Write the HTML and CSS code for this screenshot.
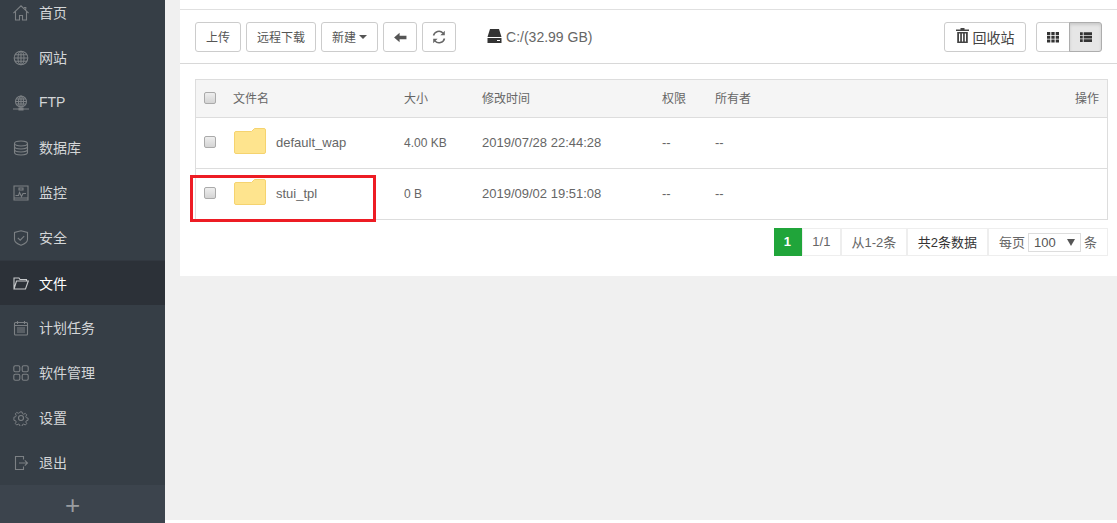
FILE: index.html
```html
<!DOCTYPE html>
<html lang="zh">
<head>
<meta charset="utf-8">
<title>文件管理</title>
<link rel="stylesheet" href="styles.css">
</head>
<body>
<div class="app">
  <aside class="sidebar">
    <nav class="menu">
      <a class="item"><svg class="ico" viewBox="0 0 16 16"><path d="M.4 8.200 8 .8l7.600 7.400M2.500 6.500V15h4v-4.500h3V15h4V6.500M11 2.500h1.800v2"/></svg><span>首页</span></a>
      <a class="item"><svg class="ico" viewBox="0 0 16 16"><circle cx="8" cy="8" r="6.800"/><ellipse cx="8" cy="8" rx="3" ry="6.800"/><path d="M8 1.200v13.600M1.200 8h13.600M2 4.800h12M2 11.200h12"/></svg><span>网站</span></a>
      <a class="item"><svg class="ico" viewBox="0 0 16 16"><circle cx="8" cy="6.500" r="5.500"/><ellipse cx="8" cy="6.500" rx="2.500" ry="5.500"/><path d="M8 1v11M2.500 6.500h11M3.200 4h9.600M3.200 9h9.600M0 14h16M6 13h4v2H6z"/></svg><span>FTP</span></a>
      <a class="item"><svg class="ico" viewBox="0 0 16 16"><ellipse cx="8" cy="3.500" rx="6.500" ry="2.500"/><path d="M1.500 3.500v9c0 1.400 2.900 2.500 6.500 2.500s6.500-1.100 6.500-2.500v-9M1.500 6.500C1.500 7.900 4.400 9 8 9s6.500-1.100 6.500-2.500M1.500 9.500c0 1.400 2.900 2.500 6.500 2.500s6.500-1.100 6.500-2.500"/></svg><span>数据库</span></a>
      <a class="item"><svg class="ico" viewBox="0 0 16 16"><path d="M1 1h14v14H1zM1 13h14M2.500 10.500h3l1-3 2 4 1.500-3h3M6 3h4v2H6z"/></svg><span>监控</span></a>
      <a class="item"><svg class="ico" viewBox="0 0 16 16"><path d="M8 .8 14.500 2.500v7c0 2.500-3.500 4.700-6.500 5.800-3-1.100-6.500-3.300-6.500-5.800v-7zM4.800 7.800l2.400 2.400 4-4"/></svg><span>安全</span></a>
      <a class="item active"><svg class="ico" viewBox="0 0 16 16"><path d="M1 14V3h5l1 1.500h6.500V6M1 14h11.500L15.300 6H3.500L1 14z"/></svg><span>文件</span></a>
      <a class="item"><svg class="ico" viewBox="0 0 16 16"><path d="M2.500 2.500h11a1 1 0 0 1 1 1v10.500a1 1 0 0 1-1 1h-11a1 1 0 0 1-1-1V3.500a1 1 0 0 1 1-1zM4.500 1v3M11.500 1v3M1.500 5.500h13M4 8h8M4 10h8M4 12h8"/></svg><span>计划任务</span></a>
      <a class="item"><svg class="ico" viewBox="0 0 16 16"><rect x=".8" y=".8" width="6" height="6" rx="1.500"/><rect x="9.200" y=".8" width="6" height="6" rx="1.500"/><rect x=".8" y="9.200" width="6" height="6" rx="1.500"/><rect x="9.200" y="9.200" width="6" height="6" rx="1.500"/></svg><span>软件管理</span></a>
      <a class="item"><svg class="ico" viewBox="0 0 16 16"><circle cx="8" cy="8" r="2.500"/><path d="M6.800 1h2.400l.4 2 1.500.7 1.800-1 1.600 1.700-1 1.700.6 1.600 2 .5v2.400l-2 .5-.6 1.500 1 1.800-1.600 1.600-1.800-1-1.500.6-.4 2H6.800l-.4-2-1.500-.6-1.800 1-1.600-1.600 1-1.800-.6-1.500-2-.5V7.100l2-.5.600-1.600-1-1.700 1.600-1.700 1.800 1 1.500-.7z" transform="translate(1 1) scale(.875)"/></svg><span>设置</span></a>
      <a class="item"><svg class="ico" viewBox="0 0 16 16"><path d="M10.500 4.500V1.500h-8v13h8v-3M6 8h8.500M11.800 5.300 14.500 8l-2.700 2.700"/></svg><span>退出</span></a>
    </nav>
    <div class="add">+</div>
  </aside>
  <main class="main">
    <section class="panel">
      <div class="toolbar">
        <div class="tools">
          <button class="btn">上传</button>
          <button class="btn">远程下载</button>
          <button class="btn">新建 <i class="caret"></i></button>
          <button class="btn icon-btn"><svg class="glyph" viewBox="0 0 14 12"><path d="M0 6 6 .8V4h7.500v4H6v3.200z"/></svg></button>
          <button class="btn icon-btn"><svg class="refresh" viewBox="0 0 14 14"><path d="M1.500 5.500A5.600 5.600 0 0 1 11 3M12.500 8.500A5.600 5.600 0 0 1 3 11"/><path class="solid" d="M12.800.8v4.400H8.400zM1.200 13.200V8.800h4.400z"/></svg></button>
          <div class="disk"><svg class="drive" viewBox="0 0 15 14"><path d="M3 0h9l2.500 8H.5zM.5 9h14v5H.5z"/><path class="slot" d="M10 11h3v1h-3z"/></svg>C:/(32.99 GB)</div>
        </div>
        <div class="tools">
          <button class="btn recycle"><svg class="trash" viewBox="0 0 13 15"><path d="M4.500 0h4v1.500H13V3H0V1.500h4.500zM1.200 4h10.600v11H1.200zM3 5.500v8h1.200v-8zM5.900 5.500v8h1.200v-8zM8.800 5.500v8H10v-8z" fill-rule="evenodd"/></svg>回收站</button>
          <div class="switch">
            <button class="sw"><svg class="grid-i" viewBox="0 0 12 12"><path d="M0 1h3.300v3H0zM4.350 1h3.300v3h-3.300zM8.700 1H12v3H8.700zM0 4.700h3.300v3H0zM4.350 4.700h3.300v3h-3.300zM8.700 4.700H12v3H8.700zM0 8.400h3.300v3H0zM4.350 8.400h3.300v3h-3.300zM8.700 8.400H12v3H8.700z"/></svg></button>
            <button class="sw on"><svg class="grid-i" viewBox="0 0 13 12"><path d="M0 .8h3v3H0zM4 .8h9v3H4zM0 4.600h3v3H0zM4 4.600h9v3H4zM0 8.400h3v3H0zM4 8.400h9v3H4z"/></svg></button>
          </div>
        </div>
      </div>
      <div class="content">
        <div class="table">
          <div class="row head">
            <span class="c-check"><i class="check"></i></span>
            <span class="c-name">文件名</span>
            <span class="c-size">大小</span>
            <span class="c-time">修改时间</span>
            <span class="c-perm">权限</span>
            <span class="c-owner">所有者</span>
            <span class="c-op">操作</span>
          </div>
          <div class="row">
            <span class="c-check"><i class="check"></i></span>
            <span class="c-name"><svg class="folder" viewBox="0 0 32 26"><path d="M.5 5a1.500 1.500 0 0 1 1.500-1.500h15.500l3-3H30a1.500 1.500 0 0 1 1.500 1.500v22a1.500 1.500 0 0 1-1.500 1.500H2A1.500 1.500 0 0 1 .5 24z"/></svg>default_wap</span>
            <span class="c-size">4.00 KB</span>
            <span class="c-time">2019/07/28 22:44:28</span>
            <span class="c-perm">--</span>
            <span class="c-owner">--</span>
            <span class="c-op"></span>
          </div>
          <div class="row">
            <span class="c-check"><i class="check"></i></span>
            <span class="c-name"><svg class="folder" viewBox="0 0 32 26"><path d="M.5 5a1.500 1.500 0 0 1 1.500-1.500h15.500l3-3H30a1.500 1.500 0 0 1 1.500 1.500v22a1.500 1.500 0 0 1-1.500 1.500H2A1.500 1.500 0 0 1 .5 24z"/></svg>stui_tpl</span>
            <span class="c-size">0 B</span>
            <span class="c-time">2019/09/02 19:51:08</span>
            <span class="c-perm">--</span>
            <span class="c-owner">--</span>
            <span class="c-op"></span>
          </div>
        </div>
        <div class="pager">
          <span class="pg cur">1</span>
          <span class="pg tight">1/1</span>
          <span class="pg tight">从1-2条</span>
          <span class="pg dark">共2条数据</span>
          <span class="pg per">每页<span class="sel">100<i class="tri"></i></span>条</span>
        </div>
      </div>
      <div class="mark"></div>
    </section>
  </main>
</div>
</body>
</html>
```
FILE: styles.css
```css
* { box-sizing: border-box; }
html, body { margin: 0; height: 523px; overflow: hidden; background: #fff; }
body { font: 12px "Liberation Sans", "Noto Sans CJK SC", sans-serif; color: #666; }
.app { display: flex; height: 523px; }

.sidebar { width: 165px; flex: none; background: #363e46; display: flex; flex-direction: column; overflow: hidden; }
.menu { margin-top: -10px; flex: 1; }
.item { display: flex; align-items: center; height: 45px; padding-left: 13px; color: #d4d6d8; font-size: 14px; font-weight: 400; }
.item span { margin-left: 10px; margin-bottom: 1px; }
.item.active { background: #2c3138; color: #fff; border-top: 1px solid #323840; }
.ico { width: 16px; height: 16px; flex: none; fill: none; stroke: #7c8084; stroke-width: 1.100; }
.item.active .ico { stroke: #c8cacc; }
.add { height: 38px; padding-right: 20px; background: #3c444d; color: #9a9da1; font-size: 26px; line-height: 40px; text-align: center; font-weight: 400; }

.main { flex: 1; height: 520px; background: #f0f0f0; padding-left: 15px; }
.panel { position: relative; background: #fff; height: 276px; padding-top: 9px; }
.toolbar { display: flex; justify-content: space-between; height: 55px; padding: 12px 15px 0 15px; border-top: 1px solid #e0e0e0; border-bottom: 1px solid #d8d8d8; }
.tools { display: flex; gap: 5px; align-items: flex-start; }
.btn { height: 30px; padding: 0 10px 2px; border: 1px solid #ccc; border-radius: 3px; background: #fff; color: #555; font: 12px "Liberation Sans", "Noto Sans CJK SC", sans-serif; display: flex; align-items: center; justify-content: center; }
.caret { display: inline-block; margin-left: 3px; margin-top: 2px; border: 4px solid transparent; border-top-color: #555; border-bottom: 0; }
.icon-btn { width: 34px; padding: 0; }
.glyph { width: 13px; height: 11px; fill: #555; }
.refresh { width: 14px; height: 14px; fill: none; stroke: #666; stroke-width: 1.500; }
.refresh .solid { fill: #666; stroke: none; }
.disk { display: flex; align-items: center; height: 30px; margin-left: 26px; font-size: 14px; color: #666; }
.drive { width: 15px; height: 14px; margin-right: 4px; margin-top: -2px; fill: #333; }
.drive .slot { fill: #fff; }
.recycle { width: 82px; font-size: 14px; color: #444; padding: 0 0 1px; }
.trash { width: 13px; height: 15px; margin-right: 4px; margin-top: -3px; fill: #444; }
.switch { display: flex; margin-left: 5px; }
.sw { width: 34px; height: 30px; border: 1px solid #ccc; background: #fff; padding: 0; display: flex; align-items: center; justify-content: center; border-radius: 3px 0 0 3px; }
.sw.on { width: 33px; background: #e6e6e6; border-color: #adadad; border-radius: 0 3px 3px 0; margin-left: -1px; box-shadow: inset 0 2px 3px rgba(0,0,0,.12); }
.grid-i { width: 12px; height: 12px; fill: #333; }

.content { padding: 15px 9px 0 15px; }
.table { border: 1px solid #ddd; }
.row { display: flex; align-items: center; height: 51px; padding-bottom: 2px; border-top: 1px solid #ddd; color: #666; font-size: 13px; }
.row.head { height: 37px; border-top: 0; background: #f5f5f5; font-size: 12px; }
.row span { flex: none; }
.c-check { width: 37px; padding-left: 8px; display: flex; }
.check { width: 12px; height: 12px; border: 1px solid #aaa; border-radius: 2px; background: linear-gradient(#eee, #d4d4d4); }
.row .c-name { width: 171px; display: flex; align-items: center; }
.folder { width: 32px; height: 26px; margin: 0 10px 3px 1px; fill: #fee48e; stroke: #f5d36f; stroke-width: 1; }
.row .c-size { width: 78px; font-size: 12px; margin-top: 2px; }
.row.head .c-size { margin-top: 0; }
.c-time { width: 180px; }
.c-perm { width: 53px; }
.row .c-owner { width: 120px; }
.row .c-op { flex: 1; text-align: right; padding-right: 8px; }

.pager { display: flex; justify-content: flex-end; margin-top: 8px; height: 28px; font-size: 13px; }
.pg { display: flex; align-items: center; justify-content: center; height: 28px; padding: 0 10px 2px; border: 1px solid #eee; border-left: 0; background: #fff; color: #666; }
.pg + .pg { border-left: 1px solid #eee; }
.pg.tight { padding: 0 9.500px 2px; }
.pg.cur { width: 28px; padding: 0 0 2px; background: #20a53a; border-color: #20a53a; color: #fff; font-weight: 700; }
.pg.dark { color: #333; }
.per { gap: 3px; }
.sel { display: flex; align-items: center; justify-content: space-between; width: 53px; height: 19px; margin-top: 2px; padding: 0 5px; border: 1px solid #ddd; color: #555; }
.tri { border: 4px solid transparent; border-top: 7px solid #555; border-bottom: 0; }

.mark { position: absolute; left: 10px; top: 175px; width: 186px; height: 47px; border: 3px solid #ed1c24; }
```
